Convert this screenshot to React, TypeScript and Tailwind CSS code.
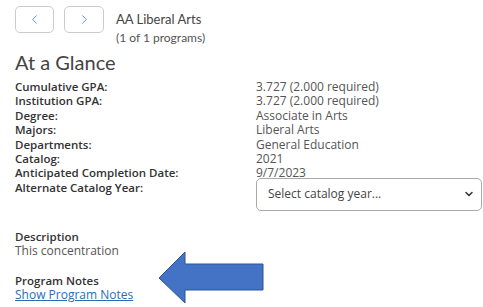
import { ChevronDown, ChevronLeft, ChevronRight } from "lucide-react";

const rows: [string, string][] = [
  ["Cumulative GPA:", "3.727 (2.000 required)"],
  ["Institution GPA:", "3.727 (2.000 required)"],
  ["Degree:", "Associate in Arts"],
  ["Majors:", "Liberal Arts"],
  ["Departments:", "General Education"],
  ["Catalog:", "2021"],
  ["Anticipated Completion Date:", "9/7/2023"],
];

const Arrow = () => (
  <svg width="106" height="53" viewBox="0 0 106 53" className="block">
    <polygon
      points="0,26 26,0 26,12 104,12 104,38 26,38 26,51"
      fill="#4472c4"
      stroke="#2f5597"
      strokeWidth="1"
    />
  </svg>
);

export default function App() {
  return (
    <div className="h-[307px] w-[483px] overflow-hidden bg-white pl-[15px] pt-[6px] font-['Open_Sans',sans-serif] text-[12px] leading-[14.4px] text-[#555]">
      <div className="flex items-start">
        <button className="flex h-[27px] w-[39px] items-center justify-center rounded-[5px] border border-[#ccc] text-[#5b8fc4]">
          <ChevronLeft size={15} strokeWidth={1.5} />
        </button>
        <button className="ml-[10px] flex h-[27px] w-[40px] items-center justify-center rounded-[5px] border border-[#ccc] text-[#5b8fc4]">
          <ChevronRight size={15} strokeWidth={1.5} />
        </button>
        <div className="ml-[12px] font-['Lato',sans-serif] text-[#444]">
          <div className="mt-[5px] text-[13px] leading-[17px]">AA Liberal Arts</div>
          <div className="mt-[2px] text-[12px] leading-[16px] text-[#555]">(1 of 1 programs)</div>
        </div>
      </div>

      <h2 className="mt-[4px] font-['Lato',sans-serif] text-[20px] leading-[24px] text-[#444]">At a Glance</h2>

      <div className="mt-[6px] grid grid-cols-[241px_1fr]">
        {rows.map(([label, value]) => (
          <div key={label} className="contents">
            <div className="text-[11.5px] font-semibold text-[#333]">{label}</div>
            <div>{value}</div>
          </div>
        ))}
        <div className="text-[11.5px] font-semibold text-[#333]">Alternate Catalog Year:</div>
        <div className="-mt-[3px]">
          <div className="flex h-[33px] w-[226px] items-center justify-between rounded-[5px] border border-[#aaa] pl-[11px] pr-[6px] text-[#444]">
            <span>Select catalog year...</span>
            <ChevronDown size={12} strokeWidth={3} className="text-[#333]" />
          </div>
        </div>
      </div>

      <div className="mt-[19px]">
        <div className="text-[11.5px] font-semibold text-[#333]">Description</div>
        <div>This concentration</div>
      </div>

      <div className="mt-[15px] flex items-start">
        <div className="w-[144px]">
          <div className="text-[11.5px] font-semibold text-[#333]">Program Notes</div>
          <a className="text-[#2a6db3] underline">Show Program Notes</a>
        </div>
        <div className="-mt-[22px]">
          <Arrow />
        </div>
      </div>
    </div>
  );
}
